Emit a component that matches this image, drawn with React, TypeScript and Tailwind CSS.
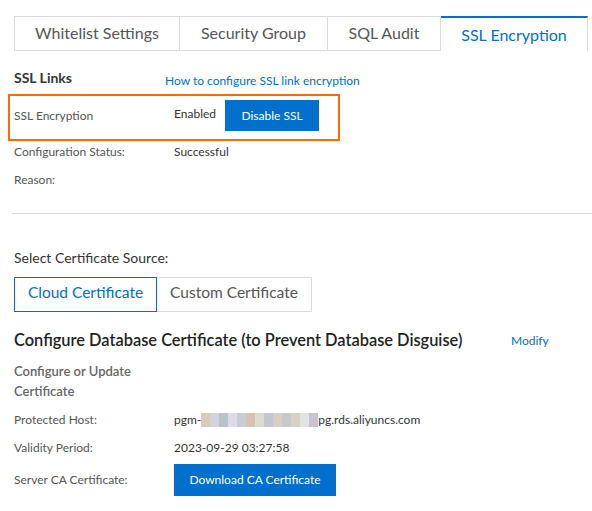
import React from "react";

const blurColors = ["#d9cbb8", "#d2d3dc", "#b9c3c9", "#dcdde2", "#c9ccd6", "#d4c3b4", "#dddcd0", "#c2c6cf", "#d5cfc4", "#c8c8d0", "#d8d2c4", "#e3e3e3", "#c9c3cf"];

export default function App() {
  return (
    <div className="w-[592px] h-[511px] bg-white overflow-hidden text-[#333]" style={{ fontFamily: "Lato, 'Noto Sans', sans-serif" }}>
      <div className="pt-[16px] pl-[14px] flex">
        <div className="h-[35px] w-[166px] border border-[#dcdcdc] flex items-center justify-center text-[16px] text-[#555] pb-[1px]">Whitelist Settings</div>
        <div className="h-[35px] w-[148px] border border-l-0 border-[#dcdcdc] flex items-center justify-center text-[16px] text-[#555] pb-[1px]">Security Group</div>
        <div className="h-[35px] w-[113px] border border-l-0 border-[#dcdcdc] flex items-center justify-center text-[16px] text-[#555] pb-[1px]">SQL Audit</div>
        <div className="h-[35px] w-[147px] border-t-2 border-t-[#0070cc] border-r border-r-[#dcdcdc] flex items-center justify-center text-[16px] text-[#0070cc]">SSL Encryption</div>
      </div>

      <div className="flex items-start mt-[18px] pl-[14px] h-[18px]">
        <div className="w-[151px] text-[14px] font-bold text-[#333] leading-[18px]">SSL Links</div>
        <div className="text-[12px] text-[#0070cc] leading-[16px] mt-[4px]">How to configure SSL link encryption</div>
      </div>

      <div className="ml-[8px] mt-[7px] w-[332px] h-[47px] border-2 border-[#ff6a00] flex items-start">
        <div className="w-[164px] pl-[4px] text-[12px] text-[#555] leading-[16px] mt-[12px]">SSL Encryption</div>
        <div className="text-[12px] text-[#333] leading-[16px] mt-[10px]">Enabled</div>
        <div className="ml-[9px] mt-[4px] h-[31px] w-[94px] bg-[#0070cc] text-white text-[12px] flex items-center justify-center">Disable SSL</div>
      </div>

      <div className="flex pl-[14px] mt-[3px] leading-[16px] text-[12px]">
        <div className="w-[160px] text-[#555]">Configuration Status:</div>
        <div className="text-[#333]">Successful</div>
      </div>
      <div className="flex pl-[14px] mt-[12px] leading-[16px] text-[12px]">
        <div className="w-[160px] text-[#555]">Reason:</div>
      </div>

      <div className="ml-[12px] mt-[25px] h-px bg-[#dcdcdc]"></div>

      <div className="pl-[14px] mt-[35px] text-[14px] text-[#333] leading-[18px]">Select Certificate Source:</div>
      <div className="pl-[14px] mt-[10px] flex">
        <div className="h-[35px] w-[143px] border border-[#0070cc] flex items-center justify-center text-[15.5px] text-[#0070cc] pb-[3px]">Cloud Certificate</div>
        <div className="h-[35px] w-[155px] border border-l-0 border-[#dcdcdc] flex items-center justify-center text-[15.5px] text-[#555] pb-[3px]">Custom Certificate</div>
      </div>

      <div className="flex items-center pl-[14px] mt-[18px] h-[20px]">
        <div className="w-[497px] text-[16.4px] font-semibold text-[#222] leading-[20px] whitespace-nowrap">Configure Database Certificate (to Prevent Database Disguise)</div>
        <div className="text-[12px] text-[#0070cc] mt-[2px]">Modify</div>
      </div>

      <div className="pl-[14px] mt-[11px] text-[13px] font-semibold text-[#666] leading-[20px]">
        <div>Configure or Update</div>
        <div>Certificate</div>
      </div>

      <div className="flex pl-[14px] mt-[11px] leading-[16px] text-[12px]">
        <div className="w-[160px] text-[#555]">Protected Host:</div>
        <div className="flex items-center text-[#333]">
          <span>pgm-</span>
          <span className="flex h-[14px]">
            {blurColors.map((c, i) => (
              <span key={i} className="w-[9px] h-[14px] inline-block" style={{ backgroundColor: c }}></span>
            ))}
          </span>
          <span>pg.rds.aliyuncs.com</span>
        </div>
      </div>
      <div className="flex pl-[14px] mt-[12px] leading-[16px] text-[12px]">
        <div className="w-[160px] text-[#555]">Validity Period:</div>
        <div className="text-[#333]">2023-09-29 03:27:58</div>
      </div>
      <div className="flex pl-[14px] mt-[8px] items-center text-[12px]">
        <div className="w-[160px] text-[#555]">Server CA Certificate:</div>
        <div className="h-[32px] w-[162px] bg-[#0070cc] text-white text-[12px] flex items-center justify-center">Download CA Certificate</div>
      </div>
    </div>
  );
}
